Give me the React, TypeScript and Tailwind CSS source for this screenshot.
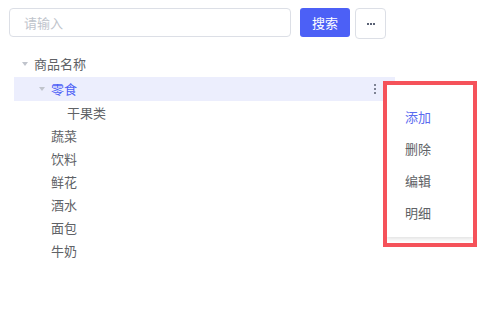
import { useState } from 'react';

type Node = { label: string; depth: number; arrow?: boolean; active?: boolean; h: number };

const nodes: Node[] = [
  { label: '商品名称', depth: 0, arrow: true, h: 26 },
  { label: '零食', depth: 1, arrow: true, active: true, h: 24 },
  { label: '干果类', depth: 2, h: 23 },
  { label: '蔬菜', depth: 1, h: 23 },
  { label: '饮料', depth: 1, h: 23 },
  { label: '鲜花', depth: 1, h: 23 },
  { label: '酒水', depth: 1, h: 23 },
  { label: '面包', depth: 1, h: 23 },
  { label: '牛奶', depth: 1, h: 23 },
];

const Caret = () => (
  <svg width="6" height="4" viewBox="0 0 6 4" className="mr-[6px]">
    <path d="M0 0 L6 0 L3 4 Z" fill="#c0c4cc" />
  </svg>
);

const menuItems = ['添加', '删除', '编辑', '明细'];

export default function App() {
  const [query, setQuery] = useState('');

  return (
    <div
      className="relative w-[487px] h-[312px] bg-white text-[13px] text-[#606266]"
      style={{ fontFamily: '"Noto Sans CJK SC", "Noto Sans", sans-serif' }}
    >
      {/* Search bar */}
      <div className="flex items-start pt-[8px] pl-[9px]">
        <input
          value={query}
          onChange={(e) => setQuery(e.target.value)}
          placeholder="请输入"
          className="w-[282px] h-[29px] rounded-[4px] border border-[#dcdfe6] px-[14px] text-[13px] placeholder:text-[#c0c4cc] outline-none"
        />
        <button className="ml-[9px] w-[50px] h-[29px] rounded-[3px] bg-[#4c60f6] text-white text-[13px]">
          搜索
        </button>
        <button className="ml-[5px] w-[31px] h-[31px] rounded-[4px] border border-[#dcdfe6] bg-white flex items-center justify-center gap-[1px]">
          <span className="w-[2px] h-[2px] bg-[#5a6275]" />
          <span className="w-[2px] h-[2px] bg-[#5a6275]" />
          <span className="w-[2px] h-[2px] bg-[#5a6275]" />
        </button>
      </div>

      {/* Tree */}
      <div className="mt-[12px] ml-[14px] w-[381px]">
        {nodes.map((n) => (
          <div
            key={n.label}
            style={{ height: n.h }}
            className={
              'flex items-center ' + (n.active ? 'bg-[#eceefd] text-[#4c60f6]' : '')
            }
          >
            <div
              className="flex items-center"
              style={{ paddingLeft: n.depth === 0 ? 8 : n.depth === 1 ? 25 : 41 }}
            >
              {n.arrow ? <Caret /> : <span className="w-[12px]" />}
              <span>{n.label}</span>
            </div>
            {n.active && (
              <div className="ml-auto mr-[19px] flex flex-col gap-[1.5px]">
                <span className="w-[2.5px] h-[2.5px] rounded-full bg-[#5a5f70]" />
                <span className="w-[2.5px] h-[2.5px] rounded-full bg-[#5a5f70]" />
                <span className="w-[2.5px] h-[2.5px] rounded-full bg-[#5a5f70]" />
              </div>
            )}
          </div>
        ))}
      </div>

      {/* Dropdown menu */}
      <div className="absolute left-[387px] top-[85px] w-[86px] h-[152px] bg-white shadow-[0_2px_4px_rgba(0,0,0,0.12)] pt-[22px] pl-[18px]">
        {menuItems.map((m, i) => (
          <div key={m} className={'h-[32px] leading-[20px] ' + (i === 0 ? 'text-[#5b6cf0]' : 'text-[#606266]')}>
            {m}
          </div>
        ))}
      </div>
      {/* highlight annotation */}
      <div className="absolute left-[383px] top-[81px] w-[94px] h-[166px] border-4 border-[#f5525a]" />
    </div>
  );
}
